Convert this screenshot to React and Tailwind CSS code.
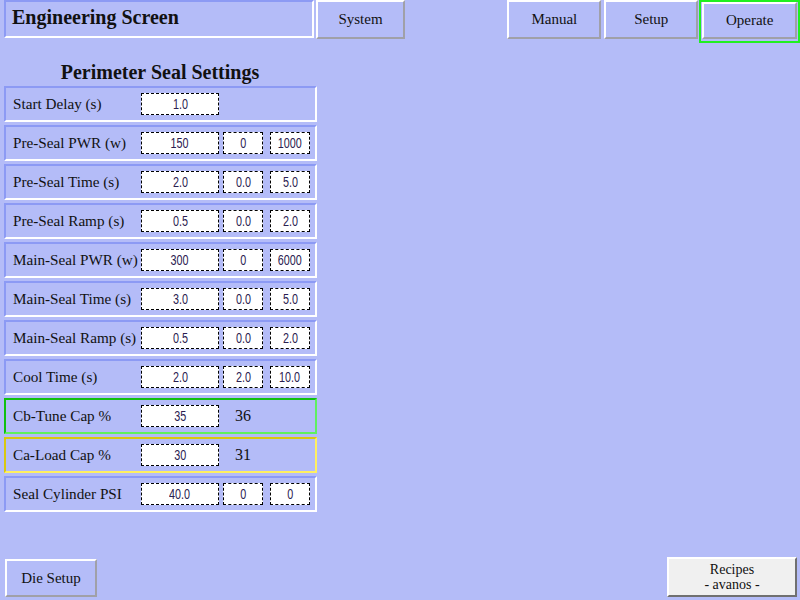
import React from "react";

const serif = { fontFamily: '"Liberation Serif", "DejaVu Serif", serif' };
const sans = { fontFamily: '"Liberation Sans", Arial, sans-serif' };

function Btn({ children, className = "" }) {
  return (
    <div
      className={
        "flex items-center justify-center border-2 border-t-white border-l-white border-r-[#a0a0a8] border-b-[#a0a0a8] bg-[#b4bcf8] text-[15px] text-[#111] " +
        className
      }
      style={serif}
    >
      {children}
    </div>
  );
}

function Field({ v, w }) {
  return (
    <div
      className={
        "h-[22px] bg-white border border-dashed border-black flex items-center justify-center text-[15px] text-[#2a2050] pt-[1px] " +
        w
      }
      style={sans}
    >
      <span className="inline-block scale-x-[0.72]">{v}</span>
    </div>
  );
}

const rows = [
  { l: "Start Delay (s)", v: ["1.0"] },
  { l: "Pre-Seal PWR (w)", v: ["150", "0", "1000"] },
  { l: "Pre-Seal Time (s)", v: ["2.0", "0.0", "5.0"] },
  { l: "Pre-Seal Ramp (s)", v: ["0.5", "0.0", "2.0"] },
  { l: "Main-Seal PWR (w)", v: ["300", "0", "6000"] },
  { l: "Main-Seal Time (s)", v: ["3.0", "0.0", "5.0"] },
  { l: "Main-Seal Ramp (s)", v: ["0.5", "0.0", "2.0"] },
  { l: "Cool Time (s)", v: ["2.0", "2.0", "10.0"] },
  { l: "Cb-Tune Cap %", v: ["35"], extra: "36", kind: "green" },
  { l: "Ca-Load Cap %", v: ["30"], extra: "31", kind: "yellow" },
  { l: "Seal Cylinder PSI", v: ["40.0", "0", "0"] },
];

function Row({ r }) {
  let border =
    "border-t-[#8c9af4] border-l-[#8c9af4] border-r-white border-b-white";
  if (r.kind === "green")
    border =
      "border-t-[#10c010] border-l-[#10c010] border-r-[#60f060] border-b-[#60f060]";
  if (r.kind === "yellow")
    border =
      "border-t-[#d8c810] border-l-[#d8c810] border-r-[#fff060] border-b-[#fff060]";
  return (
    <div className={"h-[36px] border-2 flex items-center pl-[7px] " + border}>
      <div className="w-[128px] text-[15.2px] text-[#111] whitespace-nowrap" style={serif}>
        {r.l}
      </div>
      <Field v={r.v[0]} w="w-[78px]" />
      {r.v.length > 1 && (
        <>
          <div className="w-[4px]" />
          <Field v={r.v[1]} w="w-[40px]" />
          <div className="w-[7px]" />
          <Field v={r.v[2]} w="w-[40px]" />
        </>
      )}
      {r.extra && (
        <div className="ml-[16px] text-[16px] text-[#111]" style={serif}>
          {r.extra}
        </div>
      )}
    </div>
  );
}

export default function App() {
  return (
    <div className="w-[800px] h-[600px] bg-[#b4bcf8] flex flex-col overflow-hidden">
      <div className="flex items-start h-[43px]">
        <div
          className="ml-[4px] w-[310px] h-[38px] border-2 border-t-[#8c9af4] border-l-[#8c9af4] border-r-white border-b-white flex items-center pl-[6px] pb-[4px] font-bold text-[20px] text-[#111]"
          style={serif}
        >
          Engineering Screen
        </div>
        <Btn className="ml-[2px] w-[90px] h-[39px]">System</Btn>
        <Btn className="ml-[102px] w-[94px] h-[39px]">Manual</Btn>
        <Btn className="ml-[3px] w-[94px] h-[39px]">Setup</Btn>
        <div className="ml-[1px] w-[101px] h-[43px] border-2 border-[#20f020] pl-[1px]">
          <Btn className="w-[95px] h-[37px]">Operate</Btn>
        </div>
      </div>
      <div
        className="w-[312px] ml-[4px] h-[43px] flex items-center justify-center font-bold text-[20px] text-[#111] pt-[14px]"
        style={serif}
      >
        Perimeter Seal Settings
      </div>
      <div className="ml-[4px] w-[313px] flex flex-col gap-[3px]">
        {rows.map((r) => (
          <Row key={r.l} r={r} />
        ))}
      </div>
      <div className="mt-auto flex items-end justify-between pb-[3px]">
        <Btn className="ml-[5px] w-[92px] h-[38px]">Die Setup</Btn>
        <div
          className="mr-[3px] w-[130px] h-[40px] bg-[#f0f0f0] border-2 border-t-white border-l-white border-r-[#707070] border-b-[#707070] flex flex-col items-center justify-center text-[14px] leading-[15px] text-[#111]"
          style={serif}
        >
          <div>Recipes</div>
          <div>- avanos -</div>
        </div>
      </div>
    </div>
  );
}
